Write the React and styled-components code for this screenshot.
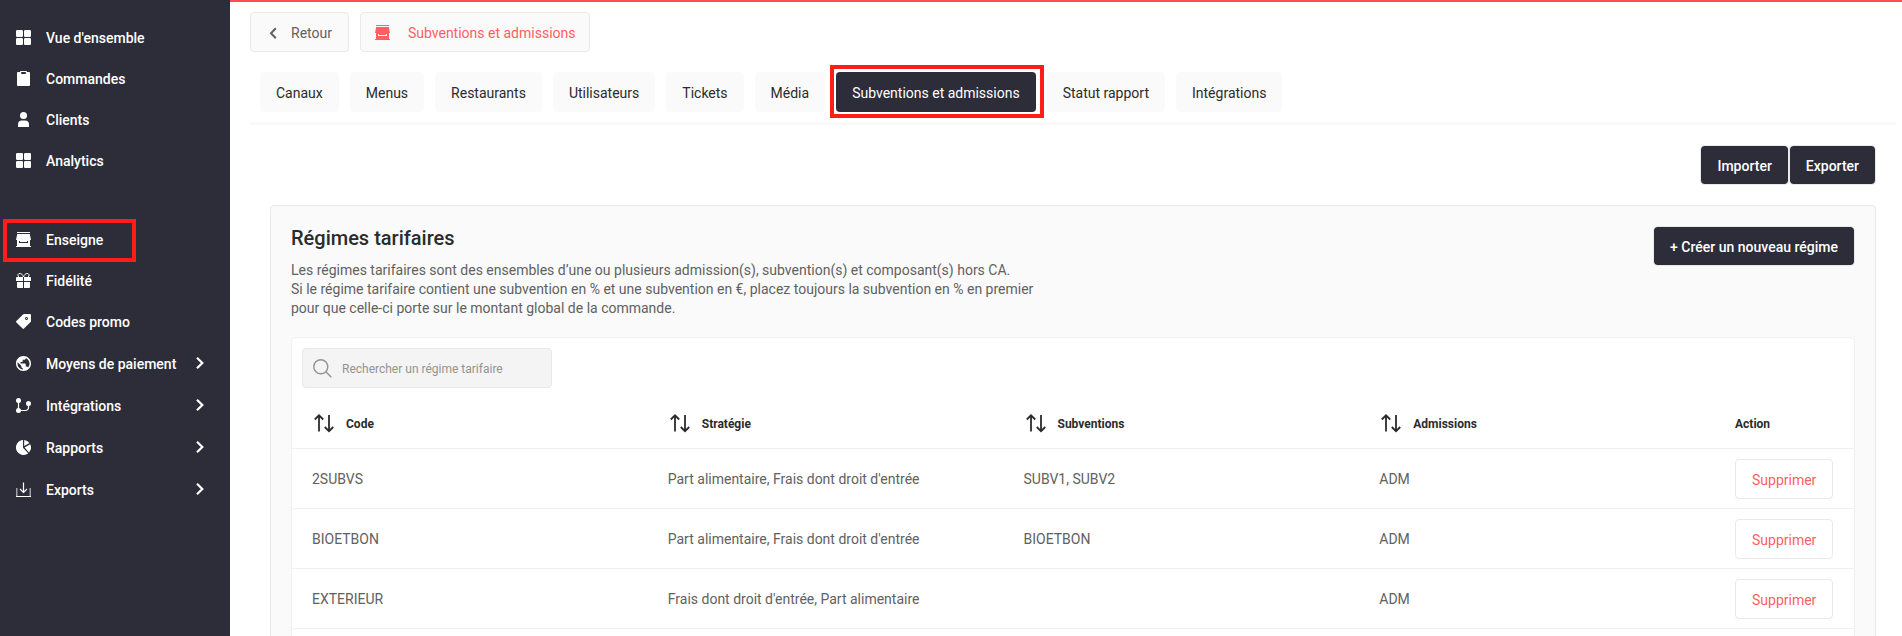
import React, { useState } from 'react'
import styled, { createGlobalStyle, css, ThemeProvider } from 'styled-components'

const theme = {
  colors: {
    dark: '#2d2d3a',
    title: '#2b2b2b',
    text: '#616161',
    muted: '#939393',
    accent: '#ff5f62',
    bar: '#ff4d52',
    highlight: '#ff1e17',
    border: '#e9e9e9',
    line: '#f0f0f0',
    panel: '#fafafa',
    field: '#f4f4f4'
  }
}

const GlobalStyle = createGlobalStyle`
  *,
  *::before,
  *::after {
    box-sizing: border-box;
  }

  body {
    margin: 0;
    background: #fff;
    color: ${theme.colors.text};
    font-family: Roboto, 'Liberation Sans', sans-serif;
    font-size: 14px;
    line-height: 19px;
  }

  button,
  input {
    font: inherit;
  }

  a {
    color: inherit;
    text-decoration: none;
  }
`

const Shell = styled.div`
  display: flex;
  height: 100vh;
`

const Sidebar = styled.nav`
  flex: 0 0 230px;
  padding-top: 17px;
  background: ${props => props.theme.colors.dark};
`

const NavList = styled.ul`
  margin: 0 0 38px;
  padding: 0;
  list-style: none;
`

const highlightBox = css`
  content: '';
  position: absolute;
  border: 4px solid ${props => props.theme.colors.highlight};
  pointer-events: none;
`

const NavItem = styled.li`
  position: relative;

  ${props =>
    props.$highlighted &&
    css`
      &::after {
        ${highlightBox}
        top: 0;
        left: 3px;
        width: 133px;
        height: 43px;
      }
    `}
`

const NavLink = styled.a`
  display: flex;
  align-items: center;
  gap: 15px;
  height: ${props => (props.$nested ? '42px' : '41px')};
  padding: 0 24px 0 16px;
  color: #fff;
  font-weight: 500;
`

const Label = styled.span`
  flex: 1;
  padding-top: 2px;
  white-space: nowrap;
`

const Icon = styled.svg`
  flex: none;
  display: block;
  width: ${props => props.$size || 15}px;
  height: ${props => props.$size || 15}px;
  fill: currentColor;
`

const LineIcon = styled(Icon)`
  fill: none;
  stroke: currentColor;
  stroke-width: ${props => props.$stroke || 2};
`

const Main = styled.main`
  flex: 1;
  min-width: 0;
  overflow-y: auto;
  scrollbar-width: none;
  border-top: 2px solid ${props => props.theme.colors.bar};
`

const Breadcrumb = styled.nav`
  display: flex;
  gap: 11px;
  padding: 10px 20px 0;
`

const Crumb = styled.a`
  display: flex;
  align-items: center;
  gap: ${props => (props.$current ? '18px' : '9px')};
  height: 40px;
  padding: 0 ${props => (props.$current ? '14px' : '16px')};
  border: 1px solid ${props => props.theme.colors.border};
  border-radius: 4px;
  background: ${props => props.theme.colors.panel};
  color: ${props => (props.$current ? props.theme.colors.accent : props.theme.colors.text)};
`

const Tabs = styled.nav`
  display: flex;
  gap: 11px;
  margin: 20px 6px 0 20px;
  padding: 0 10px 10px;
  border-bottom: 3px solid ${props => props.theme.colors.panel};
`

const Tab = styled.a`
  position: relative;
  display: flex;
  align-items: center;
  height: 40px;
  padding: 2px 16px 0;
  border-radius: 4px;
  background: ${props => (props.$active ? props.theme.colors.dark : props.theme.colors.panel)};
  color: ${props => (props.$active ? '#fff' : props.theme.colors.title)};
  white-space: nowrap;

  ${props =>
    props.$active &&
    css`
      &::after {
        ${highlightBox}
        inset: -7px -8px -6px -6px;
        z-index: 1;
      }
    `}
`

const Content = styled.div`
  padding: 20px 26px 20px 40px;
`

const Actions = styled.div`
  display: flex;
  justify-content: flex-end;
  margin-bottom: 20px;
`

const Button = styled.button`
  display: block;
  height: 40px;
  padding: ${props => (props.$danger ? '4px' : '3px')} 16px 0;
  border: 1px solid ${props => props.theme.colors.border};
  border-radius: 4px;
  background: ${props => (props.$danger ? '#fff' : props.theme.colors.dark)};
  background-clip: padding-box;
  color: ${props => (props.$danger ? props.theme.colors.accent : '#fff')};
  font-weight: ${props => (props.$danger ? 400 : 500)};
  white-space: nowrap;
  cursor: pointer;
`

const Panel = styled.section`
  padding: 20px;
  border: 1px solid ${props => props.theme.colors.border};
  border-radius: 4px;
  background: ${props => props.theme.colors.panel};
`

const PanelHeader = styled.header`
  display: flex;
  justify-content: space-between;
  align-items: flex-start;
  margin-bottom: 19px;
`

const Title = styled.h1`
  margin: 0 0 11px;
  color: ${props => props.theme.colors.title};
  font-size: 20px;
  font-weight: 500;
  line-height: 24px;
`

const Description = styled.p`
  margin: 0;
`

const TableCard = styled.div`
  padding: 10px 0;
  border: 1px solid ${props => props.theme.colors.line};
  border-radius: 4px;
  background: #fff;
`

const Search = styled.label`
  display: flex;
  align-items: center;
  gap: 10px;
  width: 250px;
  height: 40px;
  margin: 0 10px 10px;
  padding: 0 10px;
  border: 1px solid ${props => props.theme.colors.border};
  border-radius: 4px;
  background: ${props => props.theme.colors.field};
  color: ${props => props.theme.colors.muted};
`

const SearchInput = styled.input`
  flex: 1;
  min-width: 0;
  padding: 2px 0 0;
  border: 0;
  outline: 0;
  background: none;
  color: ${props => props.theme.colors.text};
  font-size: 12px;

  &::placeholder {
    color: ${props => props.theme.colors.muted};
    opacity: 1;
  }
`

const Table = styled.table`
  width: 100%;
  table-layout: fixed;
  border-collapse: separate;
  border-spacing: 0;
`

const HeadCell = styled.th`
  width: ${props => (props.$action ? '139px' : 'auto')};
  height: 51px;
  padding: ${props => (props.$action ? '2px' : 0)} 20px 0;
  border-bottom: 1px solid ${props => props.theme.colors.line};
  color: ${props => props.theme.colors.title};
  font-size: 12px;
  font-weight: 700;
  text-align: left;
`

const SortButton = styled.button`
  display: flex;
  align-items: center;
  gap: 12px;
  padding: 0 0 0 2px;
  border: 0;
  background: none;
  color: inherit;
  cursor: pointer;
`

const Cell = styled.td`
  height: 60px;
  padding: ${props => (props.$action ? 0 : '2px')} 20px 0;
  border-bottom: 1px solid ${props => props.theme.colors.line};
`

const GridIcon = () => (
  <Icon viewBox="0 0 15 15">
    <rect width="7" height="7" rx="1.2" />
    <rect x="8" width="7" height="7" rx="1.2" />
    <rect y="8" width="7" height="7" rx="1.2" />
    <rect x="8" y="8" width="7" height="7" rx="1.2" />
  </Icon>
)

const ClipboardIcon = () => (
  <Icon viewBox="0 0 15 15">
    <path
      fillRule="evenodd"
      d="M2 1h2.2V0h6.6v1H13a1 1 0 0 1 1 1v12a1 1 0 0 1-1 1H2a1 1 0 0 1-1-1V2a1 1 0 0 1 1-1zm3.2 0v2h4.6V1z"
    />
  </Icon>
)

const UserIcon = () => (
  <Icon viewBox="0 0 15 15">
    <circle cx="7.5" cy="3.5" r="3.5" />
    <path d="M2 15v-2.5a4 4 0 0 1 4-4h3a4 4 0 0 1 4 4V15z" />
  </Icon>
)

const StoreIcon = () => (
  <Icon viewBox="0 0 15 15">
    <path d="M1 0h13v1H1zM1.2 2h12.6L15 8H0z" />
    <path fillRule="evenodd" d="M1 8h13v6h1v1H0v-1h1zm2 1v2h9V9h-1v1H4V9z" />
  </Icon>
)

const GiftIcon = () => (
  <Icon viewBox="0 0 15 15">
    <path d="M1 4h6v4H0V5a1 1 0 0 1 1-1zM8 4h6a1 1 0 0 1 1 1v3H8zM1 9h6v6H2a1 1 0 0 1-1-1zM8 9h6v5a1 1 0 0 1-1 1H8z" />
    <path
      d="M7.5 4C6.5 1.5 5.5.6 4.3.6A1.7 1.7 0 0 0 3 3.8M7.5 4C8.5 1.5 9.5.6 10.7.6A1.7 1.7 0 0 1 12 3.8"
      fill="none"
      stroke="currentColor"
    />
  </Icon>
)

const TagIcon = () => (
  <Icon viewBox="0 0 15 15">
    <path
      fillRule="evenodd"
      d="M8 0h6a1 1 0 0 1 1 1v6a1.5 1.5 0 0 1-.4 1L8 14.6a1 1 0 0 1-1.4 0L.4 8.4a1 1 0 0 1 0-1.4L7 .4A1.5 1.5 0 0 1 8 0zm2.5 3a1.5 1.5 0 1 0 .01 0z"
    />
    <circle cx="10.5" cy="4.5" r=".6" />
  </Icon>
)

const GlobeIcon = () => (
  <Icon viewBox="2 2 20 20">
    <path d="M12 2C6.48 2 2 6.48 2 12s4.48 10 10 10 10-4.48 10-10S17.52 2 12 2zm-1 17.93c-3.95-.49-7-3.85-7-7.93 0-.62.08-1.21.21-1.79L9 15v1c0 1.1.9 2 2 2v1.93zm6.9-2.54c-.26-.81-1-1.39-1.9-1.39h-1v-3c0-.55-.45-1-1-1H8v-2h2c.55 0 1-.45 1-1V7h2c1.1 0 2-.9 2-2v-.41c2.93 1.19 5 4.06 5 7.41 0 2.08-.8 3.97-2.1 5.39z" />
  </Icon>
)

const BranchIcon = () => (
  <Icon viewBox="0 0 15 15">
    <circle cx="2.5" cy="2.5" r="2.5" />
    <circle cx="2.5" cy="12.5" r="2.5" />
    <circle cx="12.5" cy="5.5" r="2.5" />
    <path d="M2.5 3v9M4 12.5h5.500a3 3 0 0 0 3-3V6" fill="none" stroke="currentColor" strokeWidth="1.2" />
  </Icon>
)

const PieIcon = () => (
  <Icon viewBox="0 0 15 15">
    <path d="M7 0v7.7l5.2 5.6A7.5 7.5 0 1 1 7 0z" />
    <path d="M8.2 0a7.5 7.5 0 0 1 5.3 3.1L8.2 6z" />
    <path d="M14.2 4.2A7.5 7.5 0 0 1 13 12.4L8.6 7.4z" />
  </Icon>
)

const ExportIcon = () => (
  <Icon viewBox="0 0 15 15">
    <path d="M0 6h1.5v8H0zM13.5 6H15v8h-1.500z" opacity=".55" />
    <path d="M0 14h15v1H0z" />
    <path d="M7.5.5v10M4 7l3.5 3.5L11 7" fill="none" stroke="currentColor" strokeWidth="1.2" />
  </Icon>
)

const ChevronRight = () => (
  <LineIcon $size={12} $stroke={2.2} viewBox="0 0 12 12">
    <path d="M3 .8 8.3 6 3 11.2" />
  </LineIcon>
)

const BackIcon = () => (
  <LineIcon $stroke={2} viewBox="0 0 15 15">
    <path d="M8.8 3.2 4 8.2l4.8 5" />
  </LineIcon>
)

const SearchIcon = () => (
  <LineIcon $size={19} $stroke={1.4} viewBox="0 0 19 19">
    <circle cx="7.8" cy="7.8" r="7" />
    <path d="m12.8 12.8 5.5 5.5" />
  </LineIcon>
)

const SortIcon = () => (
  <LineIcon $size={20} $stroke={1.8} viewBox="0 0 20 20">
    <path d="M5 18.5v-16M.8 6.5 5 2.3l4.2 4.2M15 2v16M10.8 14l4.2 4.2 4.2-4.2" />
  </LineIcon>
)

const mainLinks = [
  { label: "Vue d'ensemble", icon: GridIcon },
  { label: 'Commandes', icon: ClipboardIcon },
  { label: 'Clients', icon: UserIcon },
  { label: 'Analytics', icon: GridIcon }
]

const brandLinks = [
  { label: 'Enseigne', icon: StoreIcon, highlighted: true },
  { label: 'Fidélité', icon: GiftIcon },
  { label: 'Codes promo', icon: TagIcon },
  { label: 'Moyens de paiement', icon: GlobeIcon, nested: true },
  { label: 'Intégrations', icon: BranchIcon, nested: true },
  { label: 'Rapports', icon: PieIcon, nested: true },
  { label: 'Exports', icon: ExportIcon, nested: true }
]

const tabs = [
  'Canaux',
  'Menus',
  'Restaurants',
  'Utilisateurs',
  'Tickets',
  'Média',
  'Subventions et admissions',
  'Statut rapport',
  'Intégrations'
]

const columns = [
  { key: 'code', label: 'Code' },
  { key: 'strategy', label: 'Stratégie' },
  { key: 'subsidies', label: 'Subventions' },
  { key: 'admissions', label: 'Admissions' }
]

const plans = [
  {
    code: '2SUBVS',
    strategy: "Part alimentaire, Frais dont droit d'entrée",
    subsidies: 'SUBV1, SUBV2',
    admissions: 'ADM'
  },
  {
    code: 'BIOETBON',
    strategy: "Part alimentaire, Frais dont droit d'entrée",
    subsidies: 'BIOETBON',
    admissions: 'ADM'
  },
  {
    code: 'EXTERIEUR',
    strategy: "Frais dont droit d'entrée, Part alimentaire",
    subsidies: '',
    admissions: 'ADM'
  }
]

const NavGroup = ({ links }) => (
  <NavList>
    {links.map(({ label, icon: LinkIcon, nested, highlighted }) => (
      <NavItem key={label} $highlighted={highlighted}>
        <NavLink href="#" $nested={nested}>
          <LinkIcon />
          <Label>{label}</Label>
          {nested && <ChevronRight />}
        </NavLink>
      </NavItem>
    ))}
  </NavList>
)

const PlansTable = ({ rows, onSort }) => (
  <Table>
    <thead>
      <tr>
        {columns.map(column => (
          <HeadCell key={column.key} scope="col">
            <SortButton type="button" onClick={() => onSort(column.key)}>
              <SortIcon />
              <Label>{column.label}</Label>
            </SortButton>
          </HeadCell>
        ))}
        <HeadCell scope="col" $action>
          Action
        </HeadCell>
      </tr>
    </thead>
    <tbody>
      {rows.map(row => (
        <tr key={row.code}>
          {columns.map(column => (
            <Cell key={column.key}>{row[column.key]}</Cell>
          ))}
          <Cell $action>
            <Button type="button" $danger>
              Supprimer
            </Button>
          </Cell>
        </tr>
      ))}
    </tbody>
  </Table>
)

const App = () => {
  const [query, setQuery] = useState('')
  const [sortKey, setSortKey] = useState(null)

  const rows = plans.filter(plan => plan.code.toLowerCase().includes(query.toLowerCase()))
  if (sortKey) {
    rows.sort((a, b) => a[sortKey].localeCompare(b[sortKey]))
  }

  return (
    <ThemeProvider theme={theme}>
      <GlobalStyle />
      <Shell>
        <Sidebar aria-label="Menu principal">
          <NavGroup links={mainLinks} />
          <NavGroup links={brandLinks} />
        </Sidebar>
        <Main>
          <Breadcrumb aria-label="Fil d'Ariane">
            <Crumb href="#">
              <BackIcon />
              <Label>Retour</Label>
            </Crumb>
            <Crumb href="#" $current>
              <StoreIcon />
              <Label>Subventions et admissions</Label>
            </Crumb>
          </Breadcrumb>
          <Tabs aria-label="Enseigne">
            {tabs.map(tab => (
              <Tab key={tab} href="#" $active={tab === 'Subventions et admissions'}>
                {tab}
              </Tab>
            ))}
          </Tabs>
          <Content>
            <Actions>
              <Button type="button">Importer</Button>
              <Button type="button">Exporter</Button>
            </Actions>
            <Panel>
              <PanelHeader>
                <div>
                  <Title>Régimes tarifaires</Title>
                  <Description>
                    Les régimes tarifaires sont des ensembles d’une ou plusieurs admission(s), subvention(s) et
                    composant(s) hors CA.
                    <br />
                    Si le régime tarifaire contient une subvention en % et une subvention en €, placez toujours la
                    subvention en % en premier
                    <br />
                    pour que celle-ci porte sur le montant global de la commande.
                  </Description>
                </div>
                <Button type="button">+ Créer un nouveau régime</Button>
              </PanelHeader>
              <TableCard>
                <Search>
                  <SearchIcon />
                  <SearchInput
                    type="text"
                    aria-label="Rechercher un régime tarifaire"
                    placeholder="Rechercher un régime tarifaire"
                    value={query}
                    onChange={e => setQuery(e.target.value)}
                  />
                </Search>
                <PlansTable rows={rows} onSort={setSortKey} />
              </TableCard>
            </Panel>
          </Content>
        </Main>
      </Shell>
    </ThemeProvider>
  )
}

export default App
